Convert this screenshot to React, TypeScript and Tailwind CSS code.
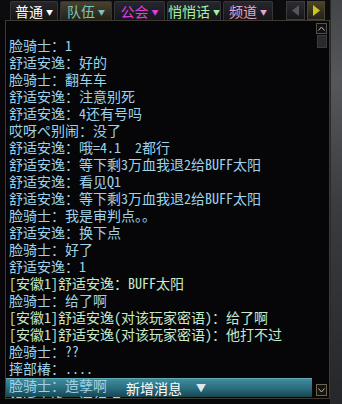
import React from 'react'

type Line = { text: string; tone: 'blue' | 'green' }

const lines: Line[] = [
  { text: '脸骑士：1', tone: 'blue' },
  { text: '舒适安逸：好的', tone: 'blue' },
  { text: '脸骑士：翻车车', tone: 'blue' },
  { text: '舒适安逸：注意别死', tone: 'blue' },
  { text: '舒适安逸：4还有号吗', tone: 'blue' },
  { text: '哎呀ぺ别闹：没了', tone: 'blue' },
  { text: '舒适安逸：哦=4.1  2都行', tone: 'blue' },
  { text: '舒适安逸：等下剩3万血我退2给BUFF太阳', tone: 'blue' },
  { text: '舒适安逸：看见Q1', tone: 'blue' },
  { text: '舒适安逸：等下剩3万血我退2给BUFF太阳', tone: 'blue' },
  { text: '脸骑士：我是审判点。。', tone: 'blue' },
  { text: '舒适安逸：换下点', tone: 'blue' },
  { text: '脸骑士：好了', tone: 'blue' },
  { text: '舒适安逸：1', tone: 'blue' },
  { text: '[安徽1]舒适安逸：BUFF太阳', tone: 'green' },
  { text: '脸骑士：给了啊', tone: 'blue' },
  { text: '[安徽1]舒适安逸(对该玩家密语)：给了啊', tone: 'green' },
  { text: '[安徽1]舒适安逸(对该玩家密语)：他打不过', tone: 'green' },
  { text: '脸骑士：??', tone: 'blue' },
  { text: '摔部椿：....', tone: 'blue' },
  { text: '脸骑士：造孽啊', tone: 'blue' },
  { text: '舒适安逸：还行吧', tone: 'blue' },
]

const tabs = [
  { label: '普通', color: 'text-white', bg: 'bg-gradient-to-b from-[#26262a] to-[#141416]', w: 'w-[48px]' },
  { label: '队伍', color: 'text-[#7cc4bc]', bg: 'bg-gradient-to-b from-[#4a4230] to-[#24221a]', w: 'w-[52px]' },
  { label: '公会', color: 'text-[#e23ee0]', bg: 'bg-gradient-to-b from-[#26262e] to-[#16161c]', w: 'w-[51px]' },
  { label: '悄悄话', color: 'text-[#a6f0a0]', bg: 'bg-gradient-to-b from-[#26262e] to-[#16161c]', w: 'w-[54px]' },
  { label: '频道', color: 'text-[#e4a6cc]', bg: 'bg-gradient-to-b from-[#26262e] to-[#16161c]', w: 'w-[50px]' },
]

export default function App() {
  return (
    <div
      className="w-[342px] h-[404px] bg-[#070709] flex overflow-hidden"
      style={{ fontFamily: '"Noto Sans Mono CJK SC", "Noto Sans CJK SC", "Noto Sans", sans-serif' }}
    >
      <div className="w-[330px] flex flex-col">
        {/* Tabs */}
        <div className="h-[20px] flex items-end pl-[10px] pt-[1px] bg-[#0c0c0e]">
          {tabs.map((t, i) => (
            <div
              key={t.label}
              className={`${t.w} h-[19px] ${t.bg} ${i === 0 ? '' : 'ml-[2px]'} rounded-t-[2px] border border-b-0 border-[#34343a] flex items-center justify-center gap-[3px]`}
            >
              <span className={`${t.color} text-[14px] leading-[14px]`}>{t.label}</span>
              <span className={`${t.color} text-[7px] leading-[7px] mt-[2px]`}>▼</span>
            </div>
          ))}
          <div className="ml-[13px] w-[19px] h-[19px] bg-gradient-to-b from-[#2c2c30] to-[#18181c] border border-[#3a3a40] flex items-center justify-center">
            <svg width="8" height="11" viewBox="0 0 8 11">
              <polygon points="7,0 7,11 0,5.5" fill="#55565c" />
            </svg>
          </div>
          <div className="ml-[2px] w-[18px] h-[19px] bg-gradient-to-b from-[#4a4428] to-[#24221a] border border-[#4a4630] flex items-center justify-center">
            <svg width="8" height="11" viewBox="0 0 8 11">
              <polygon points="1,0 1,11 8,5.5" fill="#d6c21c" />
            </svg>
          </div>
        </div>

        {/* Chat panel */}
        <div className="flex-1 ml-[5px] mb-[5px] border border-[#3e3a30] bg-[#060608] relative flex overflow-hidden">
          {/* New message bar (behind text) */}
          <div className="absolute left-0 bottom-[1px] w-[306px] h-[19px] bg-gradient-to-b from-[#3f8e9c] via-[#2a6e7e] to-[#164652] border-t border-[#62aab6] flex items-center justify-center gap-[14px] pl-[14px]">
            <span className="text-white text-[14px] leading-[14px]">新增消息</span>
            <span className="text-[#dce8ec] text-[10px] leading-[10px]">▼</span>
          </div>

          <div className="relative flex-1 pt-[16px] pl-[3px] overflow-hidden">
            {lines.map((l, i) => (
              <div
                key={i}
                className={`text-[14px] leading-[17px] h-[17px] whitespace-pre ${l.tone === 'green' ? 'text-[#c6eacc]' : 'text-[#9fd2e8]'}`}
              >
                {l.text}
              </div>
            ))}
          </div>

          {/* Scrollbar */}
          <div className="w-[15px] flex flex-col items-center pt-[2px] pb-[2px]">
            <div className="w-[11px] h-[11px] border border-[#55524a] bg-[#121214] flex items-center justify-center">
              <svg width="7" height="5" viewBox="0 0 7 5">
                <polyline points="0.5,4.5 3.5,1 6.5,4.5" fill="none" stroke="#b8b6ae" strokeWidth="1" />
              </svg>
            </div>
            <div className="w-[10px] h-[13px] mt-[1px] bg-[#2a2a2c] border border-[#3a3a3c]" />
            <div className="flex-1" />
            <div className="w-[11px] h-[12px] border border-[#6a6450] bg-[#161410] flex items-center justify-center">
              <svg width="7" height="5" viewBox="0 0 7 5">
                <polyline points="0.5,0.5 3.5,4 6.5,0.5" fill="none" stroke="#b8b6ae" strokeWidth="1" />
              </svg>
            </div>
          </div>
        </div>
      </div>

      {/* Stone frame */}
      <div className="flex-1 border-l border-[#2a2a28] bg-[radial-gradient(circle_at_30%_20%,#55575a_0,#3a3b3e_40%,#26272a_100%)]" />
    </div>
  )
}
